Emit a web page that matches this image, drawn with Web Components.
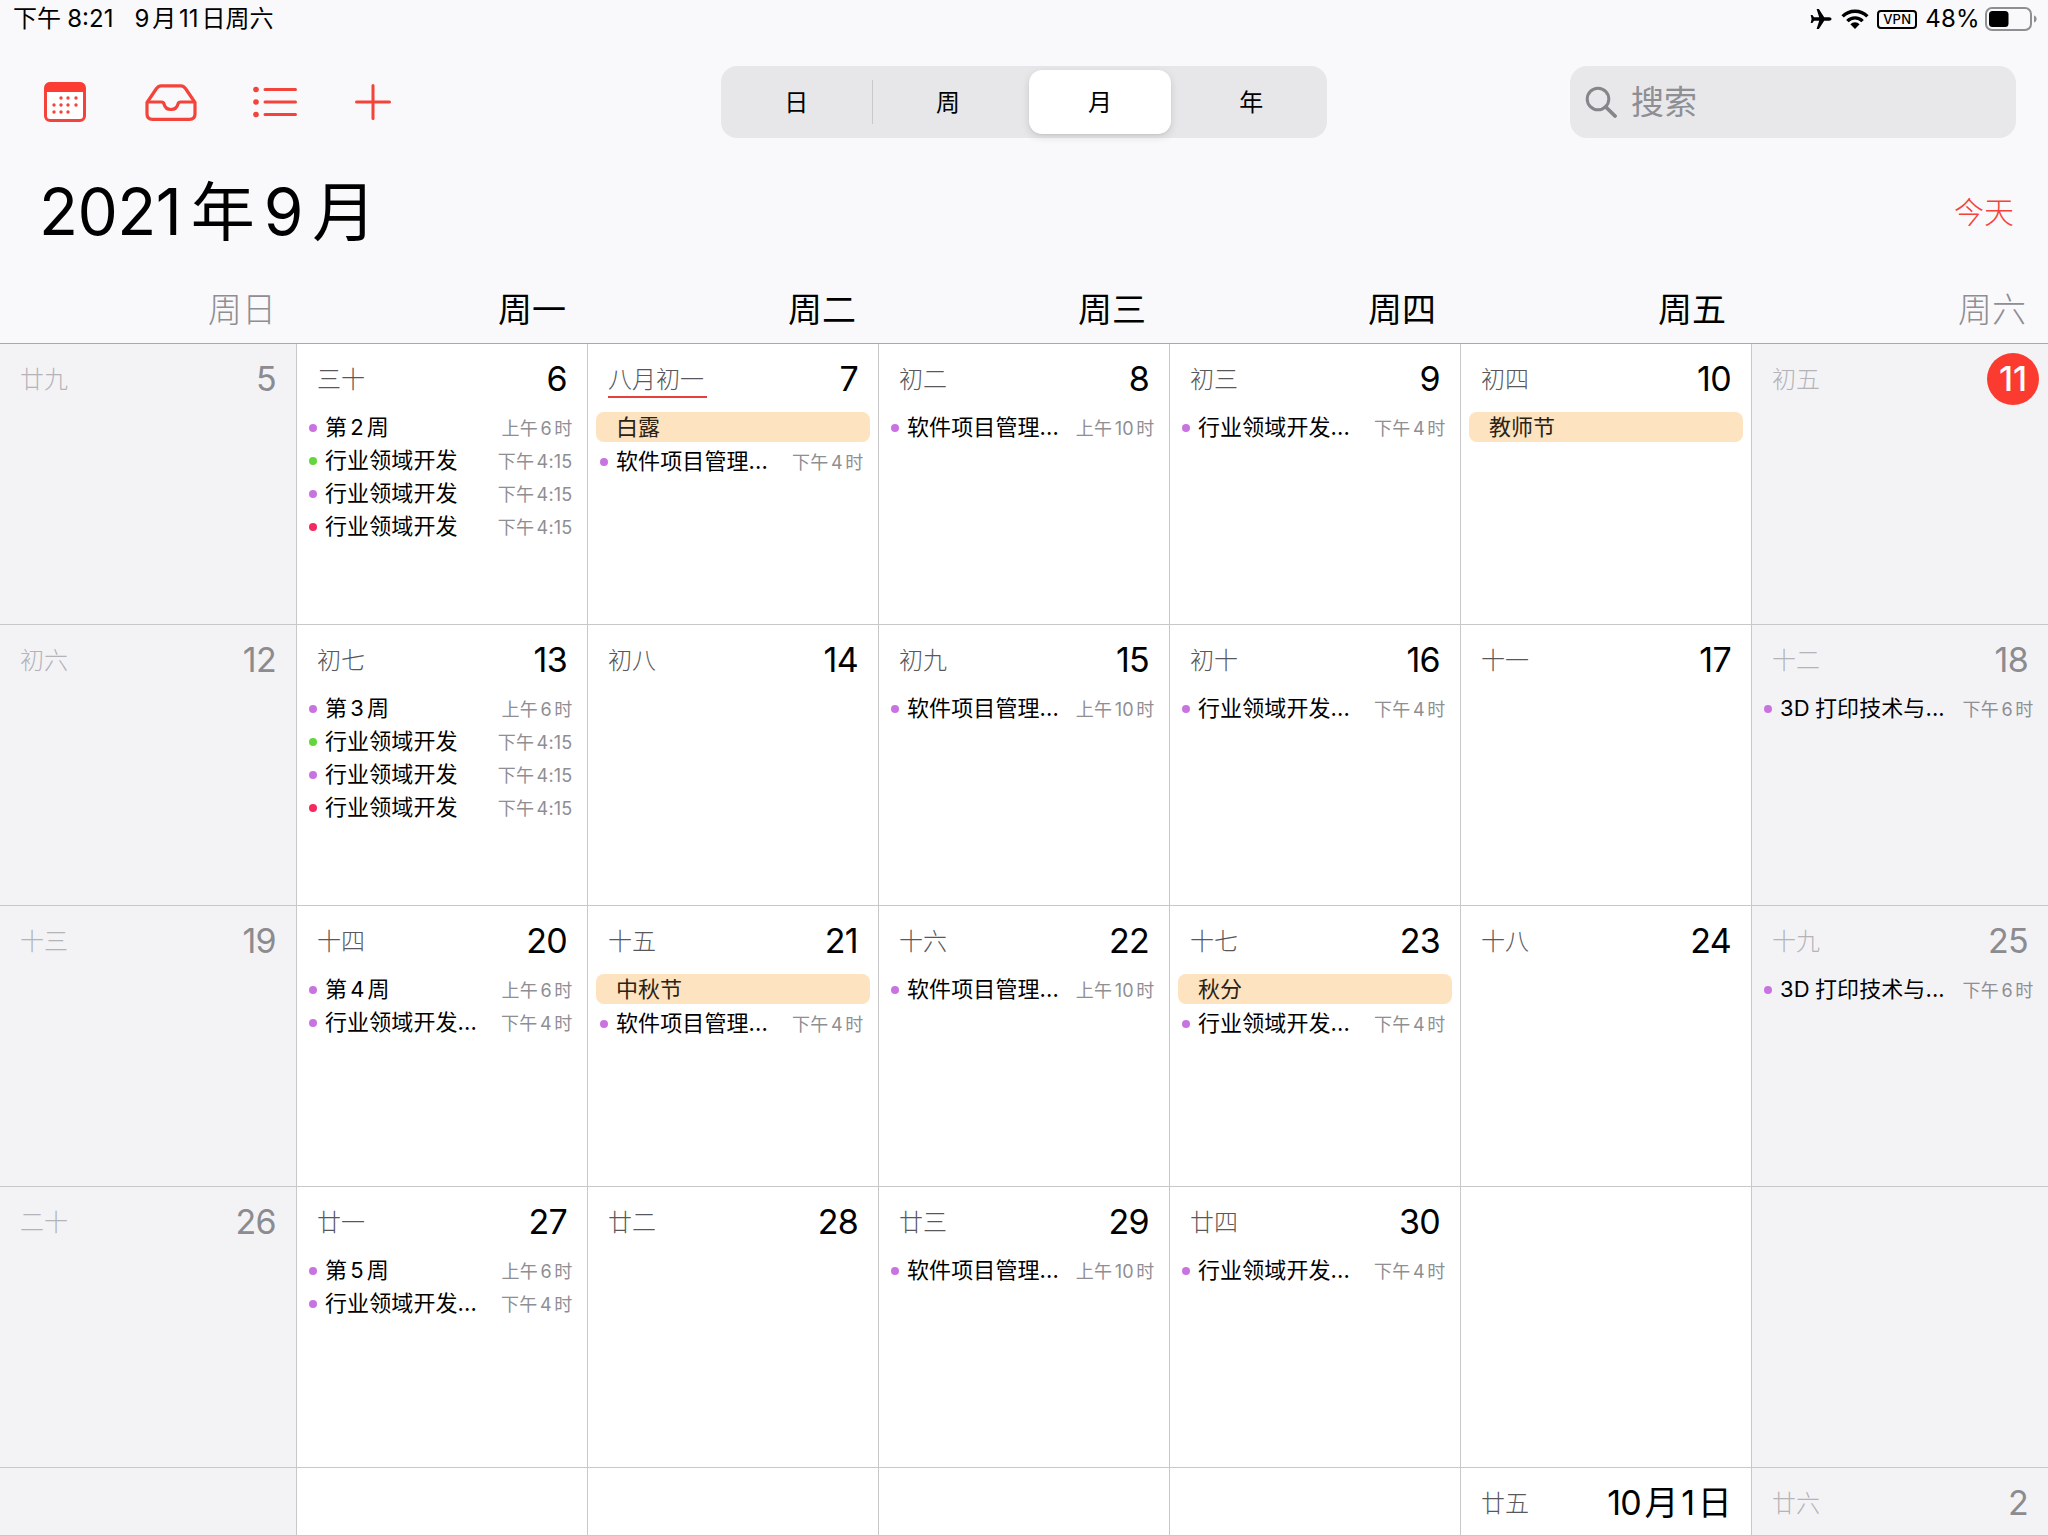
<!DOCTYPE html>
<html lang="zh-CN"><head><meta charset="utf-8"><title>日历</title>
<style>
html,body{margin:0;padding:0;background:#f9f9fb}
body{width:2048px;height:1536px;overflow:hidden;font-family:Inter,"Noto Sans CJK SC",sans-serif;color:#000}
</style></head><body>
<cal-app>
  <cal-status></cal-status>
  <cal-toolbar></cal-toolbar>
  <cal-title heading="2021年9月" today="今天"></cal-title>
  <cal-weekdays></cal-weekdays>
  <cal-grid id="grid"></cal-grid>
</cal-app>
<script>
const FONT='Inter,"Noto Sans CJK SC",sans-serif';
// wraps latin runs so they get the small gap that iOS puts between CJK and digits
function spaced(t){return t.replace(/([0-9A-Za-z:%]+)/g,(m,_,i,s)=>{
  const l=i>0&&/[^\s0-9A-Za-z:.]/.test(s[i-1])?' a':'';
  const r=i+m.length<s.length&&/[^\s.]/.test(s[i+m.length])?' b':'';
  return `<span class="g${l}${r}">${m}</span>`;});}
const GAP='.g.a{margin-left:var(--gap,.14em)}.g.b{margin-right:var(--gap,.14em)}';
function shadow(el,html){el.attachShadow({mode:'open'}).innerHTML=html;}

customElements.define('cal-app',class extends HTMLElement{constructor(){super();shadow(this,`<style>
:host{display:flex;flex-direction:column;width:2048px;height:1536px;background:#f9f9fb}
</style><slot></slot>`);}});

customElements.define('cal-status',class extends HTMLElement{constructor(){super();shadow(this,`<style>
:host{display:flex;justify-content:space-between;align-items:center;height:40px;padding:0 11px 2px 13px;box-sizing:border-box;font:400 24px/28px ${FONT};color:#000}
.lt{display:flex;gap:21px;--gap:.12em}
.lt span.time{--gap:.26em}
.rt{display:flex;align-items:center}
svg{display:block}
${GAP}
.pct{font-size:24px;margin:0 5px 0 8px;letter-spacing:.3px}
.vpn{box-sizing:border-box;width:40px;height:19px;border:2px solid #000;border-radius:4px;font:500 13px/15px ${FONT};text-align:center;margin-left:8px;letter-spacing:.2px}
</style>
<div class="lt"><span class="time">${spaced('下午8:21')}</span><span>${spaced('9月11日周六')}</span></div>
<div class="rt">
<svg width="22" height="20" viewBox="0 0 22 20"><path fill="#000" d="M21.5 10c0-1-1-1.7-2.3-1.7h-5L8.9 0H6.6l2.6 8.3H4L2.4 5.9H.7l.9 4.1-.9 4.1h1.7L4 11.7h5.2L6.6 20h2.3l5.3-8.3h5c1.3 0 2.3-.7 2.3-1.7z"/></svg>
<svg width="28" height="20" viewBox="0 0 28 20" style="margin-left:9px"><g fill="none" stroke="#000" stroke-width="3.4"><path d="M1.6 7.4a17.5 17.5 0 0 1 24.8 0"/><path d="M6.4 12.1a10.6 10.6 0 0 1 15.2 0"/></g><path fill="#000" d="M14 20l-4.6-4.7a6.4 6.4 0 0 1 9.2 0z"/></svg>
<div class="vpn">VPN</div>
<span class="pct">48%</span>
<svg width="52" height="24" viewBox="0 0 52 24"><rect x="1" y="1" width="45" height="22" rx="6" fill="none" stroke="#8e8e93" stroke-width="2"/><rect x="4" y="4" width="19.5" height="16" rx="3.5" fill="#000"/><path d="M49 8.5c1.6.4 2.6 1.8 2.6 3.5s-1 3.100-2.600 3.500z" fill="#8e8e93"/></svg>
</div>`);}});

customElements.define('cal-toolbar',class extends HTMLElement{constructor(){super();shadow(this,`<style>
:host{display:flex;align-items:center;height:72px;margin-top:26px;padding:0 32.400px 0 44px;box-sizing:content-box;font-family:${FONT}}
.icons{display:flex;align-items:center;width:676.500px;flex:none}
svg{display:block;flex:none}
.seg{width:606.500px;height:72px;flex:none;box-sizing:border-box;background:#e7e7ea;border-radius:16px;display:grid;grid-template-columns:repeat(4,1fr);position:relative;font-size:24px;line-height:74px;text-align:center;color:#000}
.seg span{position:relative;display:block}
.seg span.sep::after{content:"";position:absolute;right:-.5px;top:14px;height:44px;width:1px;background:#c9c9cc}
.seg span.on{margin:4px 4px 4px 5px;height:64px;line-height:66px;background:#fff;border-radius:13px;box-shadow:0 3px 8px rgba(0,0,0,.12),0 1px 2px rgba(0,0,0,.06)}
.search{margin-left:242.500px;flex:1;height:72px;background:#e8e8eb;border-radius:17px;display:flex;align-items:center;padding-left:15.500px;box-sizing:border-box;color:#8e8e93;font-size:33px;line-height:72px}
.search svg{margin-right:14px}
.search span{display:block;height:72px}
</style>
<div class="icons">
<svg width="42" height="40" viewBox="0 0 42 40" style="margin-top:-1px"><rect x="1.500" y="1.500" width="39" height="37" rx="4.500" fill="#fff" stroke="#f4433a" stroke-width="3"/><path d="M1 10V5a4.500 4.500 0 0 1 4.500-4.500h31A4.500 4.500 0 0 1 41 5v5z" fill="#fc3d34"/><g fill="#f4433a"><circle cx="17" cy="16" r="1.700"/><circle cx="24" cy="16" r="1.700"/><circle cx="32" cy="16" r="1.700"/><circle cx="10" cy="23" r="1.700"/><circle cx="17" cy="23" r="1.700"/><circle cx="24" cy="23" r="1.700"/><circle cx="32" cy="23" r="1.700"/><circle cx="10" cy="30" r="1.700"/><circle cx="17" cy="30" r="1.700"/><circle cx="24" cy="30" r="1.700"/></g></svg>
<svg width="52" height="37" viewBox="0 0 52 37" style="margin-left:58.500px"><path d="M2 18.500 11.500 4.500Q13.500 1.800 16 1.800H36Q38.500 1.800 40.500 4.500L50 18.500V30Q50 35.300 44.500 35.300H7.500Q2 35.300 2 30Z" fill="none" stroke="#f4433a" stroke-width="3.200" stroke-linejoin="round"/><path d="M2 18H16.500Q18.500 18 19 20Q20.500 25.500 26 25.500T33 20Q33.500 18 35.500 18H50" fill="none" stroke="#f4433a" stroke-width="3.200"/></svg>
<svg width="44" height="32" viewBox="0 0 44 32" style="margin-left:56.500px"><g fill="#f4433a"><circle cx="3" cy="3.500" r="2.800"/><circle cx="3" cy="16" r="2.800"/><circle cx="3" cy="28.500" r="2.800"/></g><g stroke="#f4433a" stroke-width="3" stroke-linecap="round"><path d="M12 3.500H42.500M12 16H42.500M12 28.500H42.500"/></g></svg>
<svg width="36" height="36" viewBox="0 0 36 36" style="margin-left:57.500px"><path d="M18 1.500V34.500M1.500 18H34.500" stroke="#f4433a" stroke-width="3" stroke-linecap="round"/></svg>
</div>
<div class="seg"><span class="sep">日</span><span>周</span><span class="on">月</span><span>年</span></div>
<div class="search"><svg width="32" height="32" viewBox="0 0 32 32"><circle cx="13" cy="13" r="10.800" fill="none" stroke="#85858a" stroke-width="3"/><path d="M20.800 21 30 30" stroke="#85858a" stroke-width="3.800" stroke-linecap="round"/></svg><span>搜索</span></div>`);}});

customElements.define('cal-title',class extends HTMLElement{constructor(){super();
const h=this.getAttribute('heading'),t=this.getAttribute('today');
shadow(this,`<style>
:host{display:flex;justify-content:space-between;align-items:center;height:148px;padding:0 34px 0 39px;font-family:${FONT}}
h1{margin:0;font:400 64px/80px ${FONT};letter-spacing:-.6px;--gap:.15em}
a{font-size:30px;line-height:44px;color:#f4433a;font-weight:300}
${GAP}
</style><h1>${spaced(h)}</h1><a>${t}</a>`);}});

const WD=['周日','周一','周二','周三','周四','周五','周六'];
const COLS='297px repeat(5,291px) 296px';
customElements.define('cal-weekdays',class extends HTMLElement{constructor(){super();shadow(this,`<style>
:host{display:grid;grid-template-columns:297px repeat(5,290px) 1fr;height:57px;font:400 34px/44px ${FONT}}
div{text-align:right;padding:2px 21px 0 0;box-sizing:border-box}
div.w{color:#8e8e93;font-weight:300}
div:last-child{padding-right:22px}
</style>${WD.map((d,i)=>`<div class="${i%6?'':'w'}">${d}</div>`).join('')}`);}});

customElements.define('cal-grid',class extends HTMLElement{constructor(){super();shadow(this,`<style>
:host{display:grid;grid-template-columns:${COLS};grid-template-rows:repeat(4,281px) 1fr;flex:1;min-height:0;border-top:1px solid #a9a9ab;background:#fff}
</style><slot></slot>`);}});

customElements.define('cal-day',class extends HTMLElement{connectedCallback(){
if(this.shadowRoot)return;
const lunar=this.getAttribute('lunar')||'',num=this.getAttribute('num')||'';
const first=this.hasAttribute('month-start'),today=this.hasAttribute('today');
shadow(this,`<style>
:host{display:block;box-sizing:border-box;border-right:1px solid #c8c8ca;border-bottom:1px solid #c8c8ca;background:#fff;font-family:${FONT};overflow:hidden;min-width:0}
:host([weekend]){background:#f3f3f6}
:host([last]){border-right:0}
.head{display:flex;justify-content:space-between;align-items:flex-start;height:67px;padding:18px 20px 0;box-sizing:border-box}
.lunar{font:300 24px/33px ${FONT};color:#58585c;margin-top:1px}
:host([weekend]) .lunar{color:#b4b4b8}
.lunar.u{box-shadow:0 2px 0 #e5403c;padding-right:3px}
.num{font:400 34px/34px ${FONT};color:#000;letter-spacing:-.7px;--gap:.1em}
:host([weekend]) .num{color:#8b8b90}
.num.t{color:#fff;background:#fb3b30;width:52px;height:52px;border-radius:50%;line-height:52px;text-align:center;margin:-9px -11px 0 0;font-weight:500;letter-spacing:0}
:host([weekend]) .num.t{color:#fff}
.ev{display:flex;flex-direction:column}
${GAP}
</style><div class="head"><span class="lunar${first?' u':''}">${lunar}</span><span class="num${today?' t':''}">${spaced(num)}</span></div><div class="ev"><slot></slot></div>`);}});

customElements.define('cal-event',class extends HTMLElement{connectedCallback(){
if(this.shadowRoot)return;
const c=this.getAttribute('color')||'#c875e0',t=this.getAttribute('time')||'';
shadow(this,`<style>
:host{display:flex;align-items:center;height:33px;padding:0 14.500px 0 12px;font:400 22px/33px ${FONT};white-space:nowrap;color:#000;letter-spacing:.1px}
i{width:8px;height:8px;border-radius:50%;background:${c};margin-right:8px;flex:none}
.n{flex:1;min-width:0}
.t{font-size:18px;color:#8e8e93;flex:none;margin:2px 0 0 4px;letter-spacing:.2px}
${GAP}
</style><i></i><span class="n"><slot></slot></span><span class="t">${spaced(t)}</span>`);}});

customElements.define('cal-allday',class extends HTMLElement{constructor(){super();shadow(this,`<style>
:host{display:block;height:30px;margin:1px 8px 3px;padding-left:20px;background:#fde3bf;border-radius:8px;font:400 22px/30px ${FONT};color:#2a2214;white-space:nowrap}
</style><slot></slot>`);}});

const P='#c973e0',G='#63d63c',R='#f5285f';
const WEEK=(n,rest)=>[[`第${n}周`,'上午6时',P],...rest];
const FOUR=[['行业领域开发','下午4:15',G],['行业领域开发','下午4:15',P],['行业领域开发','下午4:15',R]];
const DEV=['行业领域开发...','下午4时',P],SW=['软件项目管理...','下午4时',P],SW10=['软件项目管理...','上午10时',P],D3=['3D打印技术与...','下午6时',P];
const MONTH=[
['廿九','5'],['三十','6',null,WEEK(2,FOUR)],['八月初一','7','白露',[SW],1],['初二','8',null,[SW10]],['初三','9',null,[DEV]],['初四','10','教师节'],['初五','11',null,null,0,1],
['初六','12'],['初七','13',null,WEEK(3,FOUR)],['初八','14'],['初九','15',null,[SW10]],['初十','16',null,[DEV]],['十一','17'],['十二','18',null,[D3]],
['十三','19'],['十四','20',null,WEEK(4,[DEV])],['十五','21','中秋节',[SW]],['十六','22',null,[SW10]],['十七','23','秋分',[DEV]],['十八','24'],['十九','25',null,[D3]],
['二十','26'],['廿一','27',null,WEEK(5,[DEV])],['廿二','28'],['廿三','29',null,[SW10]],['廿四','30',null,[DEV]],[],[],
[],[],[],[],[],['廿五','10月1日'],['廿六','2']];
const grid=document.getElementById('grid');
MONTH.forEach((d,i)=>{
  const [lunar,num,bar,evs,ms,today]=d;
  const el=document.createElement('cal-day');
  if(lunar){el.setAttribute('lunar',lunar);el.setAttribute('num',num);}
  if(i%7===0||i%7===6)el.setAttribute('weekend','');
  if(i%7===6)el.setAttribute('last','');
  if(ms)el.setAttribute('month-start','');
  if(today)el.setAttribute('today','');
  if(bar){const b=document.createElement('cal-allday');b.textContent=bar;el.appendChild(b);}
  (evs||[]).forEach(([n,t,c])=>{const e=document.createElement('cal-event');e.setAttribute('time',t);e.setAttribute('color',c);
    e.innerHTML=n.replace(/^([^0-9A-Za-z]*)(\d+D?)(.*)$/,(m,a,b,r)=>`${a}<span style="margin:0 ${a?'.14em':'.24em 0 0'}">${b}</span>${r}`);
    el.appendChild(e);});
  grid.appendChild(el);
});
</script></body></html>
